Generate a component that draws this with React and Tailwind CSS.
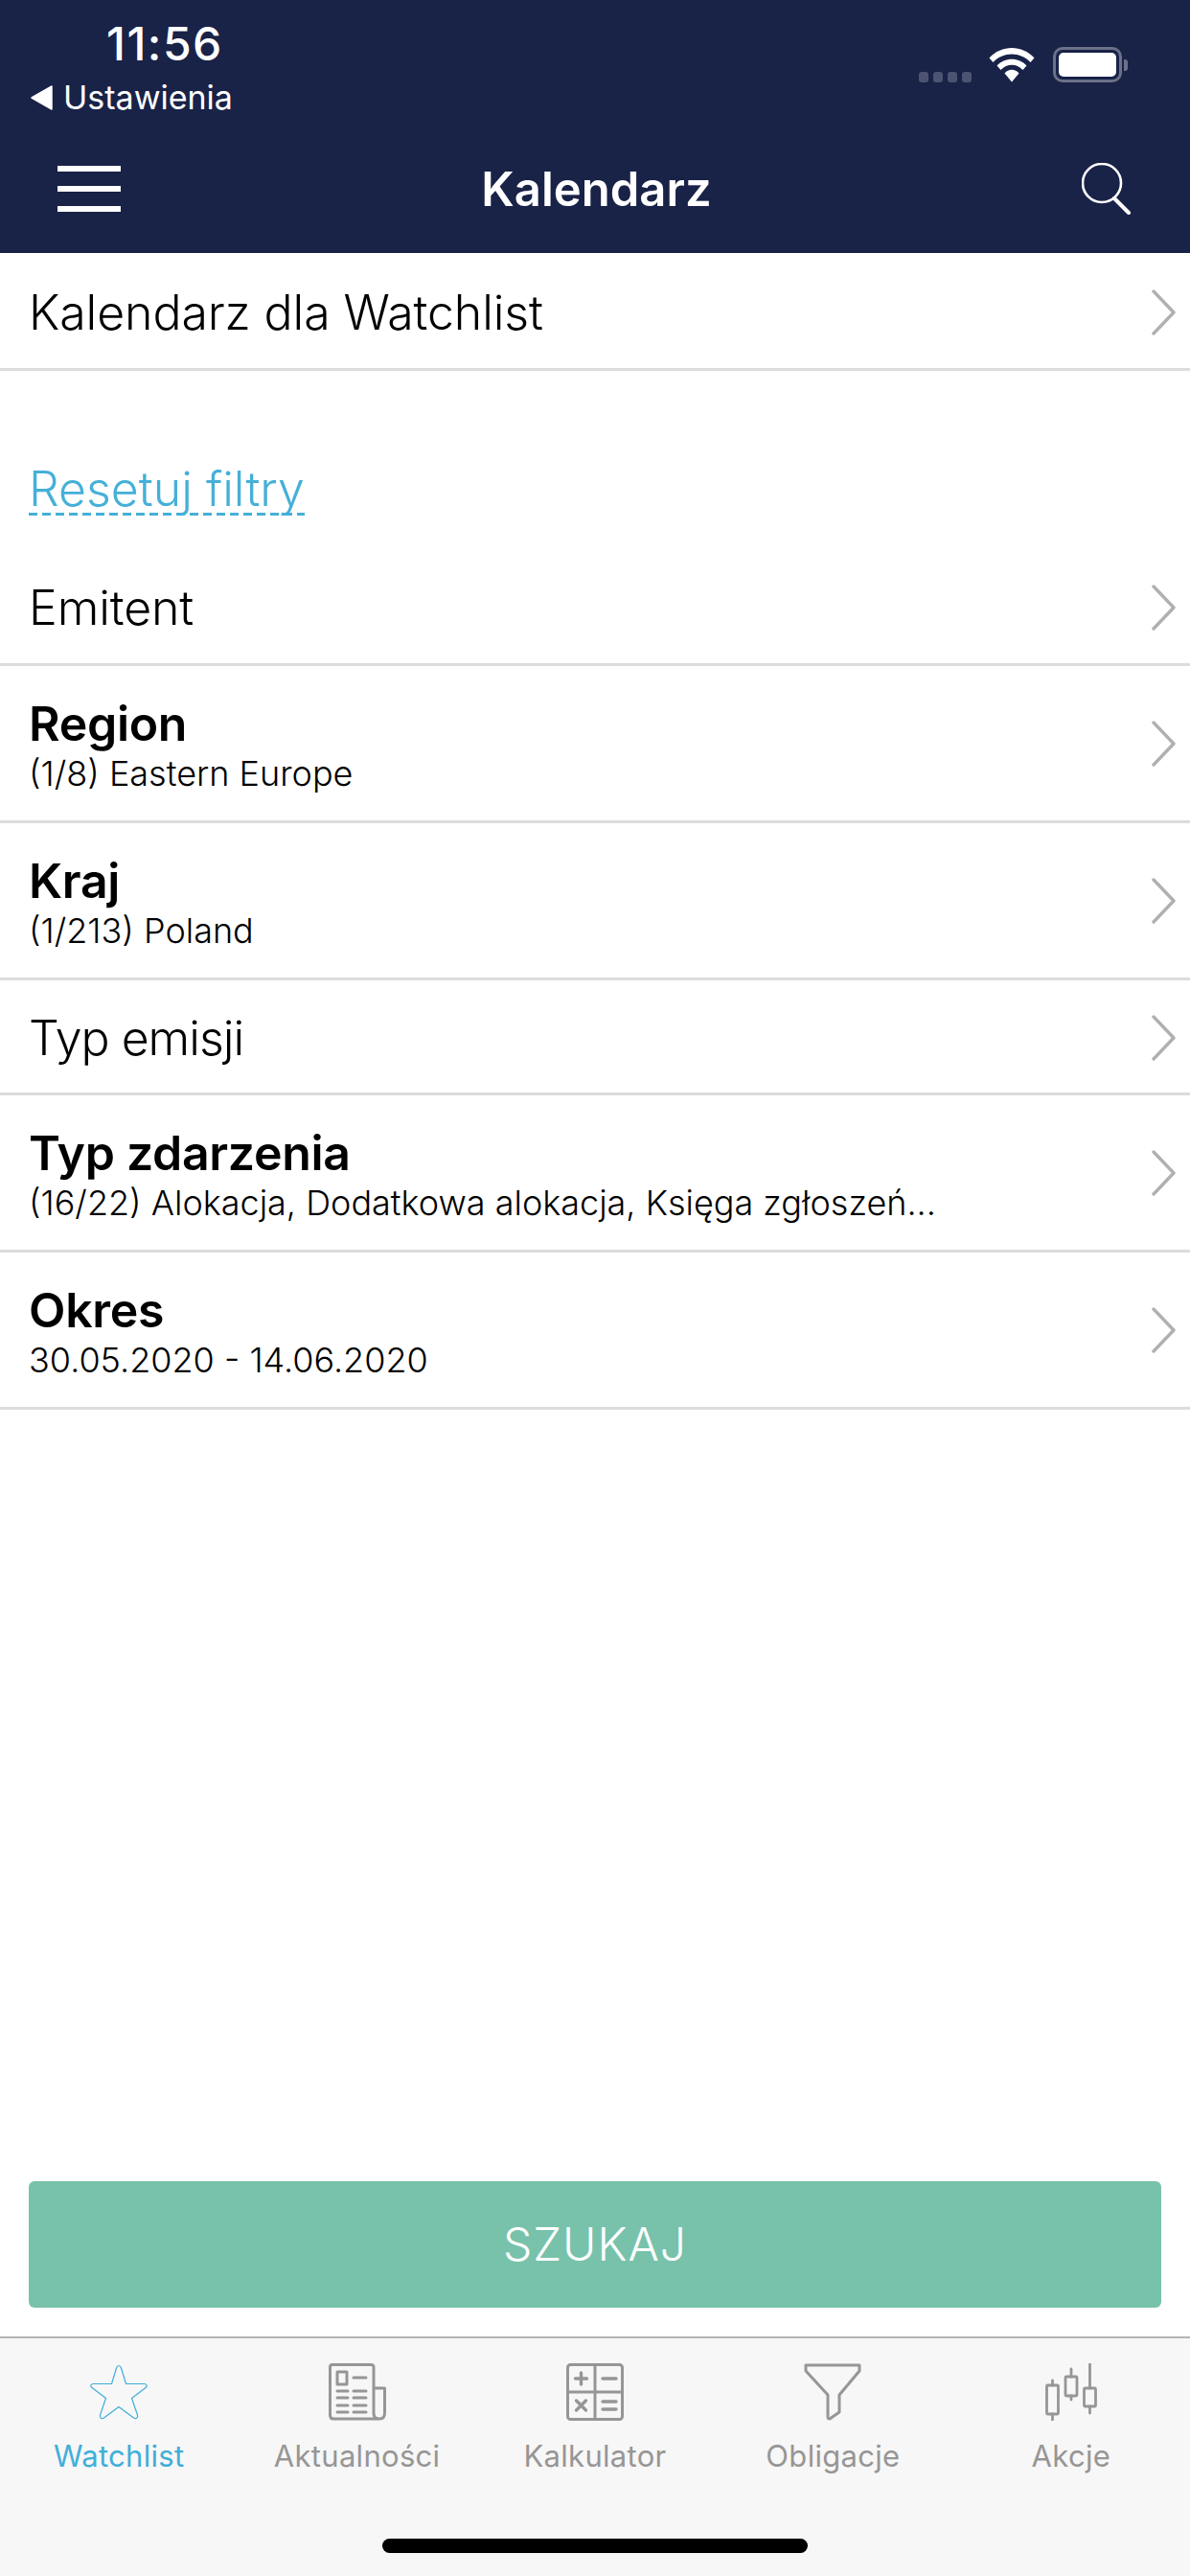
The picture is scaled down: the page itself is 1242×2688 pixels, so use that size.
const INTER = "font-['Inter','Liberation_Sans',sans-serif]";

function Chevron({ single }) {
  return (
    <svg width="26" height="48" viewBox="0 0 26 48" fill="none" className={`shrink-0 ${single ? "mt-[3px]" : ""}`}>
      <path d="M2 2 L23 24 L2 46" stroke="#b0b0b0" strokeWidth="3.4" strokeLinecap="round" strokeLinejoin="round" />
    </svg>
  );
}

function Row({ title, sub, bold, h, titleClass = "" }) {
  return (
    <div className={`flex items-center justify-between border-b-[3px] border-[#dcdcdc] pl-[30px] pr-[14px] ${h}`}>
      <div className={`flex flex-col ${sub ? "pt-[4px]" : "pt-[3px]"}`}>
        <div className={`text-[50px] leading-[56px] text-black ${bold ? "font-semibold tracking-[-0.3px]" : "font-light tracking-[-0.1px]"} ${titleClass}`}>{title}</div>
        {sub && <div className="mt-[3px] text-[36px] leading-[42px] font-light text-black">{sub}</div>}
      </div>
      <Chevron single={!sub} />
    </div>
  );
}

function Tab({ label, active, children }) {
  return (
    <div className="flex flex-1 flex-col items-center">
      <div className="flex h-[62px] items-center justify-center">{children}</div>
      <div className={`mt-[18px] text-[31px] leading-[36px] font-normal tracking-[0.3px] ${active ? "text-[#3fafd9]" : "text-[#969696]"}`}>{label}</div>
    </div>
  );
}

export default function App() {
  return (
    <div className={`flex h-[2688px] w-[1242px] flex-col overflow-hidden bg-white ${INTER}`}>
      <header className="h-[264px] shrink-0 bg-[#192247] text-white">
        <div className="flex h-[152px] justify-between">
          <div className="flex flex-col pl-[32px]">
            <div className="mt-[21px] pl-[79px] text-[48px] leading-[50px] font-medium tracking-[1.5px]">11:56</div>
            <div className="mt-[12px] flex items-center gap-[10px]">
              <svg width="24" height="28" viewBox="0 0 24 28"><path d="M1 14 L22 2 V26 Z" fill="#fff" stroke="#fff" strokeLinejoin="round" strokeWidth="1.5" /></svg>
              <span className="text-[34px] leading-[38px] font-normal">Ustawienia</span>
            </div>
          </div>
          <div className="mt-[49px] mr-[65px] flex h-[38px] items-start">
            <div className="mt-[26px] flex gap-[5px]">
              <div className="h-[11px] w-[10px] rounded-[3px] bg-[#4c5471]" />
              <div className="h-[11px] w-[10px] rounded-[3px] bg-[#4c5471]" />
              <div className="h-[11px] w-[10px] rounded-[3px] bg-[#4c5471]" />
              <div className="h-[11px] w-[10px] rounded-[3px] bg-[#4c5471]" />
            </div>
            <svg width="48" height="37" viewBox="0 0 48 37" className="ml-[18px]">
              <path d="M0.5 11.5 C13 -2.5 35 -2.5 47.5 11.5 L43.5 16 C33 4.5 15 4.5 4.5 16 Z" fill="#fff" />
              <path d="M8.5 19.5 C16.5 10.5 31.5 10.5 39.5 19.5 L35.5 24 C29 17 19 17 12.5 24 Z" fill="#fff" />
              <path d="M16.5 27.5 C20.5 22.5 27.5 22.5 31.5 27.5 L24 36.5 Z" fill="#fff" />
            </svg>
            <div className="ml-[19px] flex h-[37px] items-center">
              <div className="h-[37px] w-[72px] rounded-[10px] border-[3px] border-[#6a7189] p-[3px]">
                <div className="h-full w-full rounded-[5px] bg-white" />
              </div>
              <div className="ml-[2px] h-[12px] w-[4px] rounded-r-[3px] bg-[#6a7189]" />
            </div>
          </div>
        </div>
        <div className="flex h-[112px] items-start justify-between pl-[60px] pr-[61px]">
          <div className="mt-[21px] flex w-[66px] flex-col gap-[15px]">
            <div className="h-[6px] bg-white" />
            <div className="h-[6px] bg-white" />
            <div className="h-[6px] bg-white" />
          </div>
          <div className="mt-[17px] mr-[10px] text-[49px] leading-[58px] font-semibold">Kalendarz</div>
          <svg width="52" height="54" viewBox="0 0 52 54" fill="none" className="mt-[18px]">
            <ellipse cx="21" cy="21" rx="20" ry="20" stroke="#fff" strokeWidth="2.6" />
            <path d="M34 37 L49 52" stroke="#fff" strokeWidth="4" strokeLinecap="round" />
          </svg>
        </div>
      </header>

      <Row title="Kalendarz dla Watchlist" h="h-[123px]" />

      <div className="mt-[95px] h-[90px] pl-[30px]">
        <span className="inline-block bg-[repeating-linear-gradient(90deg,#45b0d8_0_9px,transparent_9px_14px)] bg-[length:100%_3px] bg-bottom bg-no-repeat text-[50px] leading-[56px] font-light text-[#45b0d8]">Resetuj filtry</span>
      </div>

      <Row title="Emitent" h="h-[123px]" />
      <Row title="Region" sub="(1/8) Eastern Europe" bold h="h-[164px]" />
      <Row title="Kraj" sub="(1/213) Poland" bold h="h-[164px]" />
      <Row title="Typ emisji" titleClass="tracking-[-1px]" h="h-[120px]" />
      <Row title="Typ zdarzenia" sub="(16/22) Alokacja, Dodatkowa alokacja, Księga zgłoszeń..." bold h="h-[164px]" />
      <Row title="Okres" sub="30.05.2020 - 14.06.2020" bold h="h-[164px]" />

      <div className="mt-auto px-[30px] pb-[30px]">
        <div className="flex h-[132px] items-center justify-center rounded-[6px] bg-[#78c2ab] text-[48px] font-light tracking-[1px] text-white">SZUKAJ</div>
      </div>

      <nav className="h-[250px] shrink-0 border-t-2 border-[#b4b4b4] bg-[#f7f7f7]">
        <div className="mt-[25px] flex">
          <Tab label="Watchlist" active>
            <svg width="62" height="58" viewBox="0 0 62 58" fill="none">
              <path d="M31 1.5 C32.5 1.5 33 2.5 33.5 4 L38.5 20.5 L57.5 20.5 C60.5 20.5 61 23 59 24.5 L44.5 35.5 L50.5 53 C51.5 56 48.5 57.5 46.5 56 L31 44.5 L15.5 56 C13.5 57.5 10.5 56 11.5 53 L17.5 35.5 L3 24.5 C1 23 1.5 20.5 4.5 20.5 L23.5 20.5 L28.5 4 C29 2.5 29.5 1.5 31 1.5 Z" stroke="#3fafd9" strokeWidth="1.2" strokeLinejoin="round" />
            </svg>
          </Tab>
          <Tab label="Aktualności">
            <svg width="60" height="60" viewBox="0 0 60 60" fill="none" stroke="#969696" strokeWidth="3" strokeLinecap="round" strokeLinejoin="round">
              <path d="M53 58 H5 Q1.5 58 1.5 54 V4 Q1.5 1.5 4 1.5 H44 Q47 1.5 47 4 V52 Q47 58 53 58 Q58.5 58 58.5 52 V26 H47" />
              <rect x="9" y="9" width="10" height="13" />
              <path d="M26 15 H39 M9 29 H20 M26 29 H39 M9 36 H20 M26 36 H39 M9 44 H20 M26 44 H39 M9 51 H20 M26 51 H39" />
            </svg>
          </Tab>
          <Tab label="Kalkulator">
            <svg width="60" height="60" viewBox="0 0 60 60" fill="none" stroke="#969696" strokeWidth="3" strokeLinecap="round" strokeLinejoin="round">
              <rect x="1.5" y="1.5" width="57" height="57" rx="3" />
              <path d="M1.5 30 H58.5 M30 1.5 V58.5" />
              <path d="M15.5 10 V22 M9.5 16 H21.5 M38 16 H52 M10.5 39 L20.5 49 M20.5 39 L10.5 49 M38 40 H52 M38 48 H52" strokeWidth="3.4" />
            </svg>
          </Tab>
          <Tab label="Obligacje">
            <svg width="60" height="60" viewBox="0 0 60 60" fill="none" stroke="#969696" strokeWidth="3" strokeLinecap="round" strokeLinejoin="round">
              <path d="M2 2 H58 V8 L37 33 V51 L27 58 Q25 58 25 56 V33 L2 8 Z" />
            </svg>
          </Tab>
          <Tab label="Akcje">
            <svg width="54" height="60" viewBox="0 0 54 60" fill="none" stroke="#969696" strokeWidth="2.8" strokeLinecap="round" strokeLinejoin="round">
              <rect x="1.5" y="23" width="12" height="30" rx="1" />
              <path d="M7.5 18 V23 M7.5 53 V59" />
              <rect x="21" y="14" width="12" height="20" rx="1" />
              <path d="M27 6 V14 M27 34 V38" />
              <rect x="40.5" y="26" width="12" height="19" rx="1" />
              <path d="M46.5 1 V26 M46.5 45 V52" />
            </svg>
          </Tab>
        </div>
        <div className="mx-auto mt-[68px] h-[15px] w-[444px] rounded-full bg-black" />
      </nav>
    </div>
  );
}
